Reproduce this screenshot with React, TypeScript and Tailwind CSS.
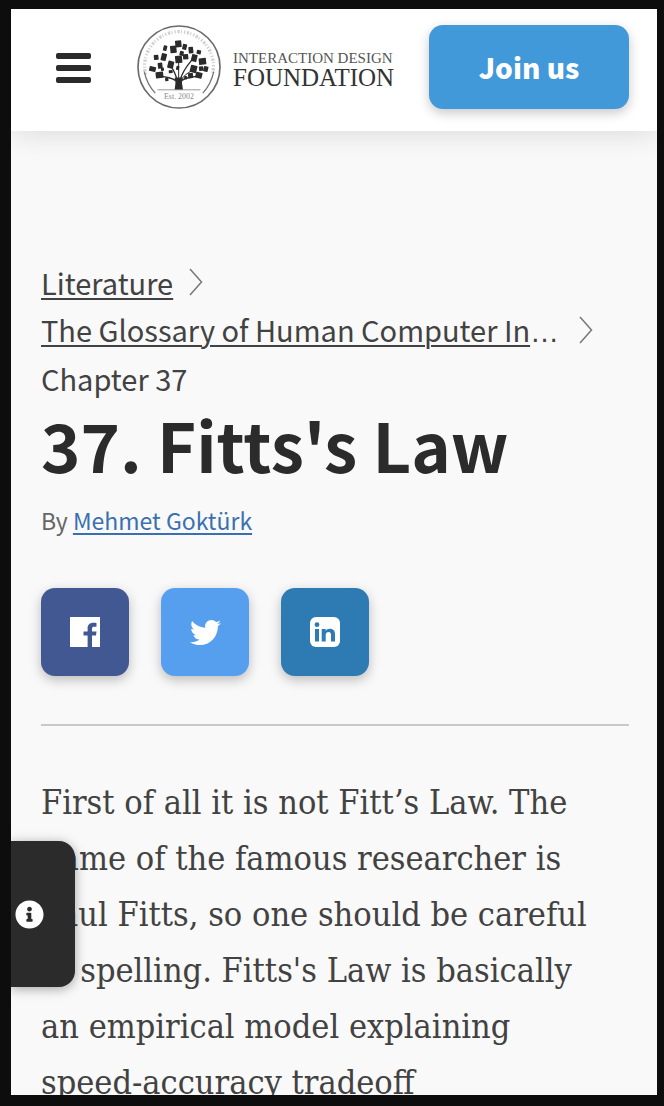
import React from "react";
import { FaInfoCircle, FaTwitter } from "react-icons/fa";

const leaves: [number, number, number, number][] = [
  [535, 130, 19, 20], [554, 139, 13, 17], [573, 149, 14, 20], [597, 155, 13, 12],
  [520, 147, 19, 22], [495, 143, 11, 16], [468, 171, 14, 15], [491, 170, 16, 22],
  [536, 177, 21, 22], [545, 159, 12, 14], [557, 169, 16, 16], [583, 173, 17, 22],
  [608, 183, 22, 20], [457, 206, 20, 15], [480, 196, 14, 18], [512, 193, 18, 22],
  [478, 224, 23, 19], [581, 206, 20, 22], [604, 205, 13, 14], [618, 206, 14, 16],
  [572, 226, 15, 16], [597, 225, 20, 18], [500, 238, 10, 10], [557, 232, 9, 10],
  [512, 214, 12, 9], [533, 203, 9, 12], [487, 207, 9, 10],
];

function TreeSeal() {
  return (
    <svg viewBox="410 73 254 254" className="size-[84px] shrink-0" aria-hidden="true">
      <circle cx="537" cy="200" r="124" fill="#fff" stroke="#6a6a6a" strokeWidth="5" />
      <path
        d="M436 222A104 104 0 1 1 638 222"
        fill="none"
        stroke="#d0d0d0"
        strokeWidth="10"
        strokeDasharray="4 5 7 4 3 6"
      />
      <path d="M432 214Q440 252 465 279M642 214Q634 252 609 279" fill="none" stroke="#777" strokeWidth="4" />
      <path d="M472 269H602" stroke="#999" strokeWidth="3" />
      <g fill="#2b2b2b">
        {leaves.map(([x, y, w, h], i) => (
          <rect
            key={i}
            x={x - w / 2}
            y={y - h / 2}
            width={w}
            height={h}
            rx="2"
            transform={`rotate(${i % 2 ? 14 : -6} ${x} ${y})`}
          />
        ))}
        <path d="M524 268Q529 250 524 232L548 232Q543 250 549 268Z" />
      </g>
      <g fill="none" stroke="#2b2b2b" strokeWidth="5">
        <path d="M526 240Q510 231 480 228M546 240Q560 231 596 228" />
        <path d="M531 240Q528 222 512 196M541 240Q545 215 578 176" strokeWidth="4" />
        <path d="M536 240V180M543 238Q554 222 580 208" strokeWidth="3" />
      </g>
      <text
        x="537"
        y="296"
        textAnchor="middle"
        fill="#8a8a8a"
        className="font-['Liberation_Serif',serif] text-[24px]"
      >
        Est. 2002
      </text>
    </svg>
  );
}

function FacebookMark() {
  return (
    <svg viewBox="0 0 30 30" className="size-[30px]" aria-hidden="true">
      <path
        fill="#fff"
        d="M0 0H30V30H22V18.500H26L26.500 14.500H22V12C22 10.300 22.700 9.700 24.300 9.700H26.500V6C25.900 5.900 24.700 5.800 23.400 5.800C19.800 5.800 17.600 7.900 17.600 11.600V14.500H13.500V18.500H17.600V30H0Z"
      />
    </svg>
  );
}

function LinkedinMark() {
  return (
    <svg viewBox="0 0 30 30" className="size-[30px]" aria-hidden="true">
      <rect width="30" height="30" rx="6" fill="#fff" />
      <g fill="#2e7ab3">
        <circle cx="7" cy="7.700" r="2.400" />
        <path d="M5 12H9V24.500H5ZM11.700 12H15.700V13.700C16.500 12.400 17.900 11.700 19.900 11.700C23.400 11.700 25 13.900 25 17.400V24.500H21V18C21 16.100 20.200 15.100 18.600 15.100C16.800 15.100 15.700 16.200 15.700 18.200V24.500H11.700Z" />
      </g>
    </svg>
  );
}

function Chevron() {
  return (
    <svg viewBox="0 0 14 28" className="h-7 w-3.5 shrink-0" aria-hidden="true">
      <path d="M1 1L12.500 14L1 27" fill="none" stroke="#777" strokeWidth="1.500" />
    </svg>
  );
}

const paragraph = [
  "First of all it is not Fitt’s Law. The",
  "name of the famous researcher is",
  "Paul Fitts, so one should be careful",
  "in spelling. Fitts's Law is basically",
  "an empirical model explaining",
  "speed-accuracy tradeoff",
];

const tile =
  "flex size-[88px] items-center justify-center rounded-[14px] shadow-[0_4px_12px_rgba(0,0,0,0.25)]";

export default function App() {
  return (
    <div className="h-screen bg-[#0d0d0d] pt-[9px] pr-[7px] pb-[11px] pl-[11px] font-['Noto_Sans_CJK_SC',sans-serif]">
      <div className="relative flex h-full flex-col overflow-hidden bg-[#f9f9f9] text-[#424242]">
        <header className="flex shrink-0 items-center bg-white pt-4 pr-7 pb-[22px] pl-[45px] shadow-[0_2px_28px_rgba(0,0,0,0.13)]">
          <button type="button" aria-label="Menu" className="flex w-[35px] flex-col gap-1.5 pt-2.5 pb-2">
            <span className="h-[6px] w-full rounded-[2px] bg-[#2b2b2b]" />
            <span className="h-[6px] w-full rounded-[2px] bg-[#2b2b2b]" />
            <span className="h-[6px] w-full rounded-[2px] bg-[#2b2b2b]" />
          </button>
          <a href="#home" className="ml-[46px] flex items-center gap-3 font-['Liberation_Serif',serif] text-[#333]">
            <TreeSeal />
            <span className="flex flex-col pt-1.5 whitespace-nowrap">
              <span className="text-[15px] leading-4 text-[#555]">INTERACTION DESIGN</span>
              <span className="text-[25px] leading-6">FOUNDATION</span>
            </span>
          </a>
          <button
            type="button"
            className="ml-auto flex h-[84px] w-[200px] items-center justify-center rounded-[14px] bg-[#4199da] text-[28px] font-black text-white shadow-[0_4px_12px_rgba(0,0,0,0.22)]"
          >
            Join us
          </button>
        </header>

        <main className="pt-[127px] pr-7 pl-[30px]">
          <nav aria-label="Breadcrumb" className="text-[29px] leading-[48px]">
            <div className="flex h-12 items-center gap-4">
              <a href="#literature" className="underline decoration-2 underline-offset-[3px]">Literature</a>
              <Chevron />
            </div>
            <div className="flex h-12 items-center gap-5 whitespace-nowrap">
              <span>
                <a href="#glossary" className="underline decoration-2 underline-offset-[3px]">
                  The Glossary of Human Computer In
                </a>
                <span className="font-['Liberation_Sans',sans-serif]">…</span>
              </span>
              <Chevron />
            </div>
            <div className="h-12">Chapter 37</div>
          </nav>
          <h1 className="text-[67px] leading-[84px] font-bold text-[#2b2b2b]">37. Fitts's Law</h1>
          <p className="mt-1.5 text-[23px] leading-[56px] text-[#666]">
            By{" "}
            <a href="#author" className="text-[#3a70b2] underline decoration-2 underline-offset-[3px]">
              Mehmet Goktürk
            </a>
          </p>
          <div className="mt-10 flex gap-8">
            <a href="#facebook" aria-label="Share on Facebook" className={`${tile} bg-[#425893]`}>
              <FacebookMark />
            </a>
            <a href="#twitter" aria-label="Share on Twitter" className={`${tile} bg-[#569fee]`}>
              <FaTwitter className="size-[31px] text-white" />
            </a>
            <a href="#linkedin" aria-label="Share on LinkedIn" className={`${tile} bg-[#2e7ab3]`}>
              <LinkedinMark />
            </a>
          </div>
          <hr className="mt-12 border-t-2 border-[#c8cac9]" />
          <p className="mt-12 font-['DejaVu_Serif_Condensed','DejaVu_Serif',serif] text-[34px] leading-[56px] whitespace-nowrap">
            {paragraph.map((line) => (
              <span key={line} className="block">{line}</span>
            ))}
          </p>
        </main>

        <button
          type="button"
          aria-label="Information"
          className="absolute top-[832px] left-0 flex h-[146px] w-16 items-center rounded-r-2xl bg-[#2b2b2b] pl-1 text-white shadow-[0_2px_12px_rgba(0,0,0,0.35)]"
        >
          <FaInfoCircle className="size-[29px]" />
        </button>
      </div>
    </div>
  );
}
